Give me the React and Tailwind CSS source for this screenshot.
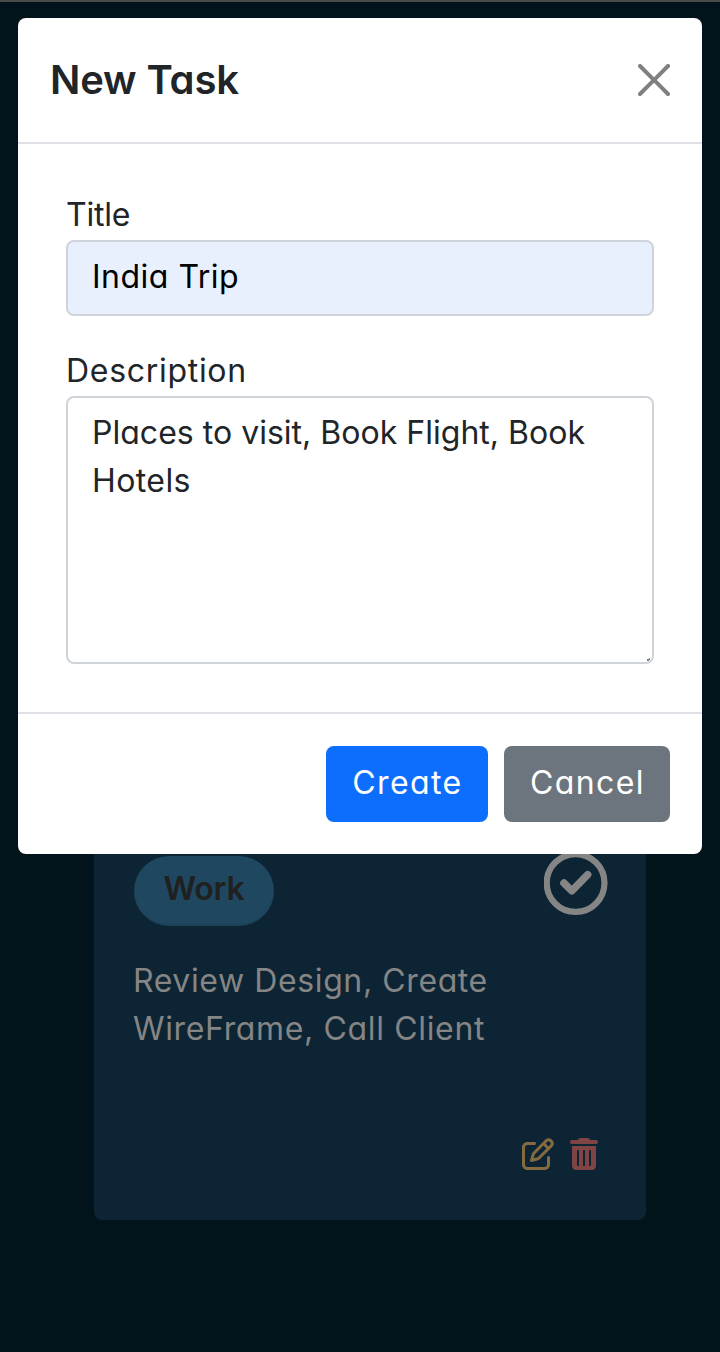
import { FaRegPenToSquare, FaTrashCan } from "react-icons/fa6";

function CheckCircleIcon({ className }) {
  return (
    <svg viewBox="0 0 64 64" className={className} fill="none" stroke="#858585">
      <circle cx="31.6" cy="32" r="28.9" strokeWidth="6.2" />
      <path d="M19.9 32l7.9 7.8L43.7 23.6" strokeWidth="7.4" strokeLinecap="round" strokeLinejoin="round" />
    </svg>
  );
}

function TaskCard() {
  return (
    <div className="mr-[74px] ml-[94px] mt-[800px] flex h-[420px] flex-col rounded-lg bg-[#0c2433] px-10">
      <div className="flex items-start justify-between pt-14">
        <div className="flex h-[70px] w-[140px] justify-center rounded-full border-b-2 border-[#1c4156] bg-[#1f475f] pt-[9px] text-[32px] leading-[48px] font-semibold text-[#202020]">
          <span className="tracking-[-0.2px]">Work</span>
        </div>
        <CheckCircleIcon className="-mt-[5px] -mr-[2px] size-16" />
      </div>
      <p className="-ml-px mt-[31px] text-[32px] leading-[48px] whitespace-nowrap text-[#858585]">
        <span className="tracking-[0.6px]">Review Design, Create</span>
        <br />
        <span className="tracking-[0.65px]">WireFrame, Call Client</span>
      </p>
      <div className="mt-[85px] flex justify-end gap-4 pr-[8.5px]">
        <FaRegPenToSquare className="size-8 text-[#846b3f]" />
        <FaTrashCan className="h-8 w-7 text-[#814444]" />
      </div>
    </div>
  );
}

function CloseIcon() {
  return (
    <svg viewBox="0 0 16 16" className="size-8" fill="#808080">
      <path d="M.293.293a1 1 0 011.414 0L8 6.586 14.293.293a1 1 0 111.414 1.414L9.414 8l6.293 6.293a1 1 0 01-1.414 1.414L8 9.414l-6.293 6.293a1 1 0 01-1.414-1.414L6.586 8 .293 1.707a1 1 0 010-1.414z" />
    </svg>
  );
}

function NewTaskDialog() {
  return (
    <div role="dialog" className="m-[18px] flex h-[836px] flex-col rounded-lg bg-white text-[32px] leading-[48px] text-[#212529]">
      <header className="flex h-[126px] shrink-0 items-center justify-between border-b-2 border-[#dee2e6] px-8">
        <h1 className="text-[40px] leading-[60px] font-semibold tracking-[-0.15px]">New Task</h1>
        <button aria-label="Close"><CloseIcon /></button>
      </header>
      <main className="flex grow flex-col px-12 pt-12">
        <label className="h-12 leading-[46px] tracking-[-0.2px]">Title</label>
        <div className="h-[76px] rounded-lg border-2 border-[#ced4da] bg-[#e8f0fe] px-6 pt-[11px] text-black">
          <span className="tracking-[0.5px]">India Trip</span>
        </div>
        <label className="mt-8 h-12 leading-[46px] tracking-[0.7px]">Description</label>
        <div className="flex h-[268px] flex-col rounded-lg border-2 border-[#ced4da] px-6 pt-[11px] whitespace-nowrap">
          <span className="tracking-[0.02px]">Places to visit, Book Flight, Book</span>
          <span className="tracking-[0.4px]">Hotels</span>
          <svg viewBox="0 0 4 4" className="mt-auto -mr-[23px] size-1 self-end">
            <path d="M0 2h2M2 1h1" stroke="#555" strokeWidth="1.5" />
          </svg>
        </div>
      </main>
      <footer className="flex h-[142px] shrink-0 items-center justify-end gap-4 border-t-2 border-[#dee2e6] px-8 text-white">
        <button className="h-[76px] w-[162px] rounded-lg bg-[#0d6efd] pb-[2px] pl-px tracking-[1.4px]">Create</button>
        <button className="h-[76px] w-[166px] rounded-lg bg-[#6c757d] pb-[2px] pl-px tracking-[1.4px]">Cancel</button>
      </footer>
    </div>
  );
}

export default function App() {
  return (
    <div className="grid h-[1352px] w-[720px] overflow-hidden bg-[#02131c] font-['Inter',sans-serif] [font-feature-settings:'cv11']">
      <div className="col-start-1 row-start-1 border-t-2 border-[#4a4a4a]">
        <div className="-mt-[2px] flow-root">
          <TaskCard />
        </div>
      </div>
      <div className="z-10 col-start-1 row-start-1">
        <NewTaskDialog />
      </div>
    </div>
  );
}
